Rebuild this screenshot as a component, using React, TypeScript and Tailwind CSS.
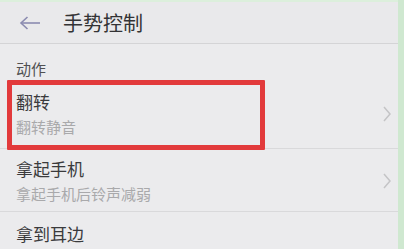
const font = { fontFamily: '"Noto Sans CJK SC", "Noto Sans", sans-serif' };

function Chevron() {
  return (
    <svg width="10" height="16" viewBox="0 0 10 16" className="shrink-0">
      <polyline points="2,1 8,8 2,15" fill="none" stroke="#c4c4c6" strokeWidth="1.5" />
    </svg>
  );
}

interface RowProps {
  title: string;
  subtitle?: string;
  className: string;
  divider?: boolean;
}

function Row({ title, subtitle, className, divider }: RowProps) {
  return (
    <div className={`flex items-center pl-[16px] pr-[6px] ${divider ? "border-b border-[#d9d9db]" : ""} ${className}`}>
      <div className="flex-1 flex flex-col">
        <span className="text-[17px] leading-[20px] text-[#3a3a3c]">{title}</span>
        {subtitle && (
          <span className="text-[15px] leading-[18px] text-[#a9a9ab] mt-[6px]">{subtitle}</span>
        )}
      </div>
      {subtitle && <Chevron />}
    </div>
  );
}

export default function App() {
  return (
    <div className="w-[404px] h-[249px] overflow-hidden flex bg-[#ebebed] relative" style={font}>
      <div className="flex-1 flex flex-col border-t-2 border-[#dcefdc]">
        <div className="h-[42px] flex items-center border-b border-[#d4d4d6] bg-[#e9e9eb]">
          <svg width="22" height="14" viewBox="0 0 22 14" className="ml-[19px]">
            <line x1="2" y1="7" x2="21" y2="7" stroke="#8b8bb0" strokeWidth="1.6" />
            <polyline points="8.5,1 2,7 8.5,13" fill="none" stroke="#8b8bb0" strokeWidth="1.6" />
          </svg>
          <span className="ml-[22px] text-[20px] leading-[24px] text-[#333335]">手势控制</span>
        </div>
        <div className="pl-[16px] pt-[16px] text-[15px] leading-[18px] text-[#505052]">动作</div>
        <Row title="翻转" subtitle="翻转静音" className="pt-[14px] pb-[12px]" divider />
        <Row title="拿起手机" subtitle="拿起手机后铃声减弱" className="pt-[10px] pb-[8px]" divider />
        <Row title="拿到耳边" className="pt-[12px]" />
      </div>
      <div className="w-[6px] bg-[#cfe8d0]" />
      <div className="absolute left-[7px] top-[80px] w-[258px] h-[70px] border-[5px] border-[#e23a3c] rounded-[1px]" />
    </div>
  );
}
